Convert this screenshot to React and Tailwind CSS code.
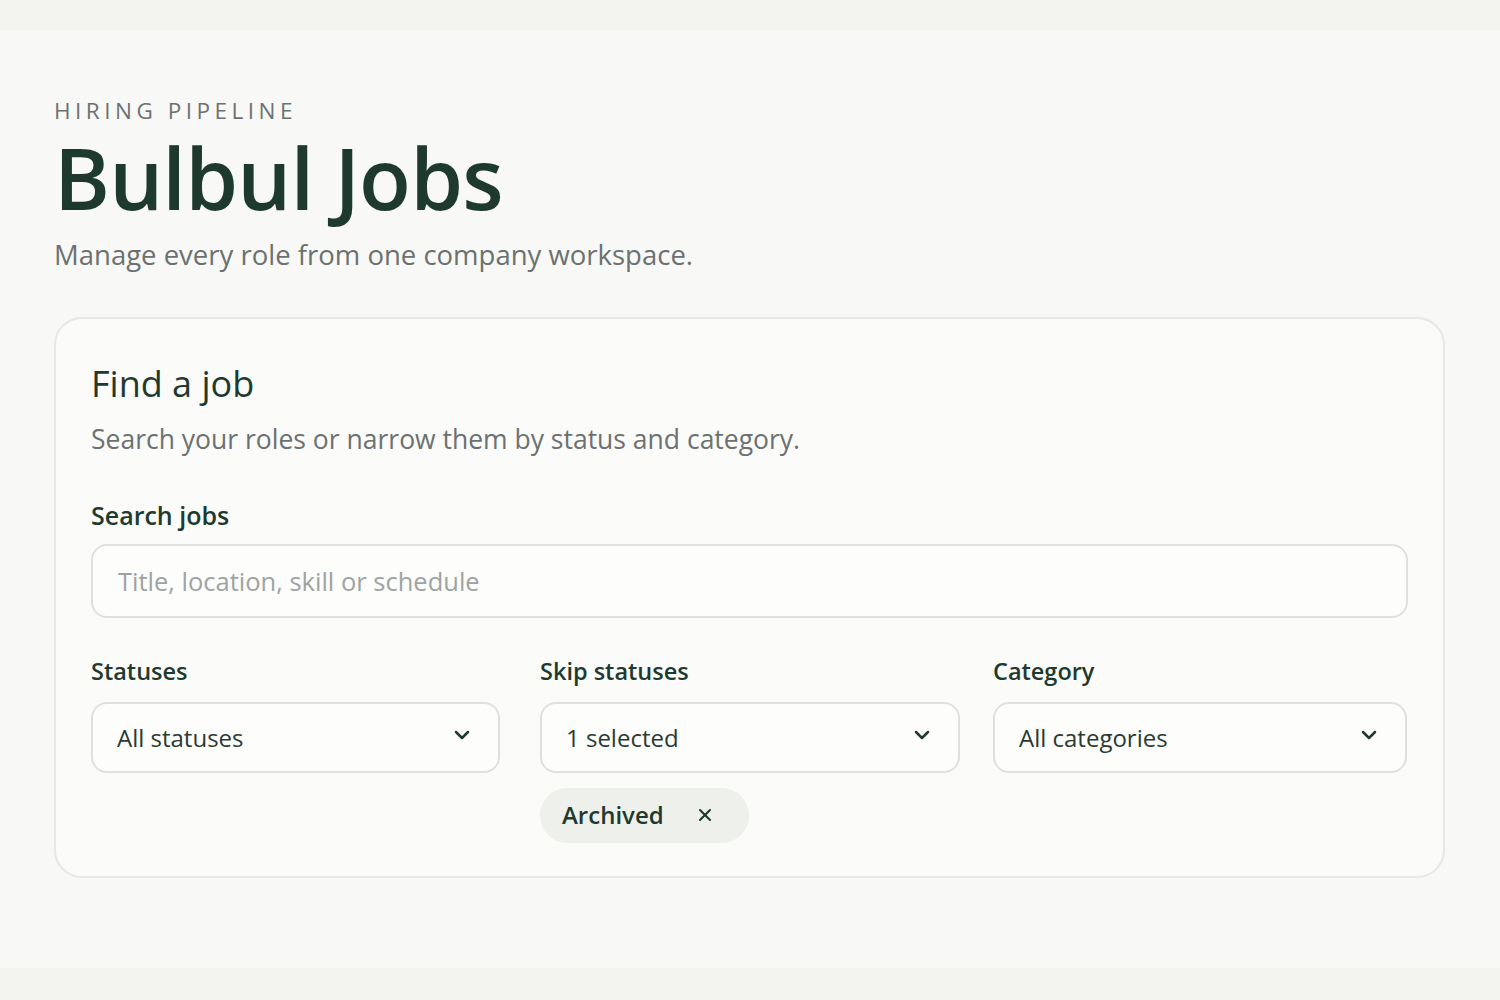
import { ChevronDown, X } from 'lucide-react';

const font = { fontFamily: '"Open Sans", Lato, sans-serif' };

const Select = ({ label, value, width }) => (
  <div>
    <div className="text-[23.5px] font-semibold text-[#1e3a2f] leading-none mb-[18px] mt-[2px]">{label}</div>
    <button style={{ width }} className="h-[71px] flex items-center justify-between pl-[24px] pr-[24px] rounded-[16px] border-2 border-[#dfe2dc] bg-[#fdfdfc] text-[24px] text-[#2a3a33]">
      <span className="mt-[2px]">{value}</span>
      <ChevronDown size={24} strokeWidth={2.5} className="text-[#1e3a2f] mb-[4px]" />
    </button>
  </div>
);

export default function App() {
  return (
    <div style={font} className="min-h-[1000px] flex flex-col bg-[#f8f8f6]">
      <div className="h-[30px] bg-[#f3f4f0]" />
      <main className="flex-1 px-[54px] pt-[70px]">
        <p className="text-[22.5px] tracking-[0.2em] text-[#6b7171] font-medium leading-none">HIRING PIPELINE</p>
        <h1 className="mt-[14px] text-[85px] leading-[0.95] font-semibold text-[#1e3a2f] tracking-[-0.01em]">Bulbul Jobs</h1>
        <p className="mt-[24px] text-[27.5px] text-[#6b7171] leading-none">Manage every role from one company workspace.</p>

        <section className="mt-[48px] w-[1391px] rounded-[28px] border-2 border-[#e6e8e3] bg-[#fbfbfa] px-[35px] pt-[47px] pb-[33px]">
          <h2 className="text-[36px] leading-none font-medium text-[#1e3a2f]">Find a job</h2>
          <p className="mt-[24px] text-[26.5px] leading-none text-[#6b7171]">Search your roles or narrow them by status and category.</p>

          <label className="block mt-[51px] text-[25px] font-semibold text-[#1e3a2f] leading-none">Search jobs</label>
          <input
            placeholder="Title, location, skill or schedule"
            className="mt-[16px] w-full h-[74px] rounded-[16px] border-2 border-[#dfe2dc] bg-[#fdfdfc] px-[25px] text-[25.5px] text-[#2a3a33] placeholder:text-[#9ea3a2] outline-none"
          />

          <div className="mt-[40px] grid grid-cols-[449px_453px_413px]">
            <Select label="Statuses" value="All statuses" width={409} />
            <div>
              <Select label="Skip statuses" value="1 selected" width={420} />
              <span className="mt-[15px] inline-flex items-center gap-[31px] h-[55px] pl-[22px] pr-[34px] rounded-full bg-[#eef0eb] text-[24px] font-semibold text-[#1e3a2f]">
                Archived
                <X size={20} strokeWidth={2.5} />
              </span>
            </div>
            <Select label="Category" value="All categories" width={414} />
          </div>
        </section>
      </main>
      <div className="h-[32px] bg-[#f3f4f0]" />
    </div>
  );
}
